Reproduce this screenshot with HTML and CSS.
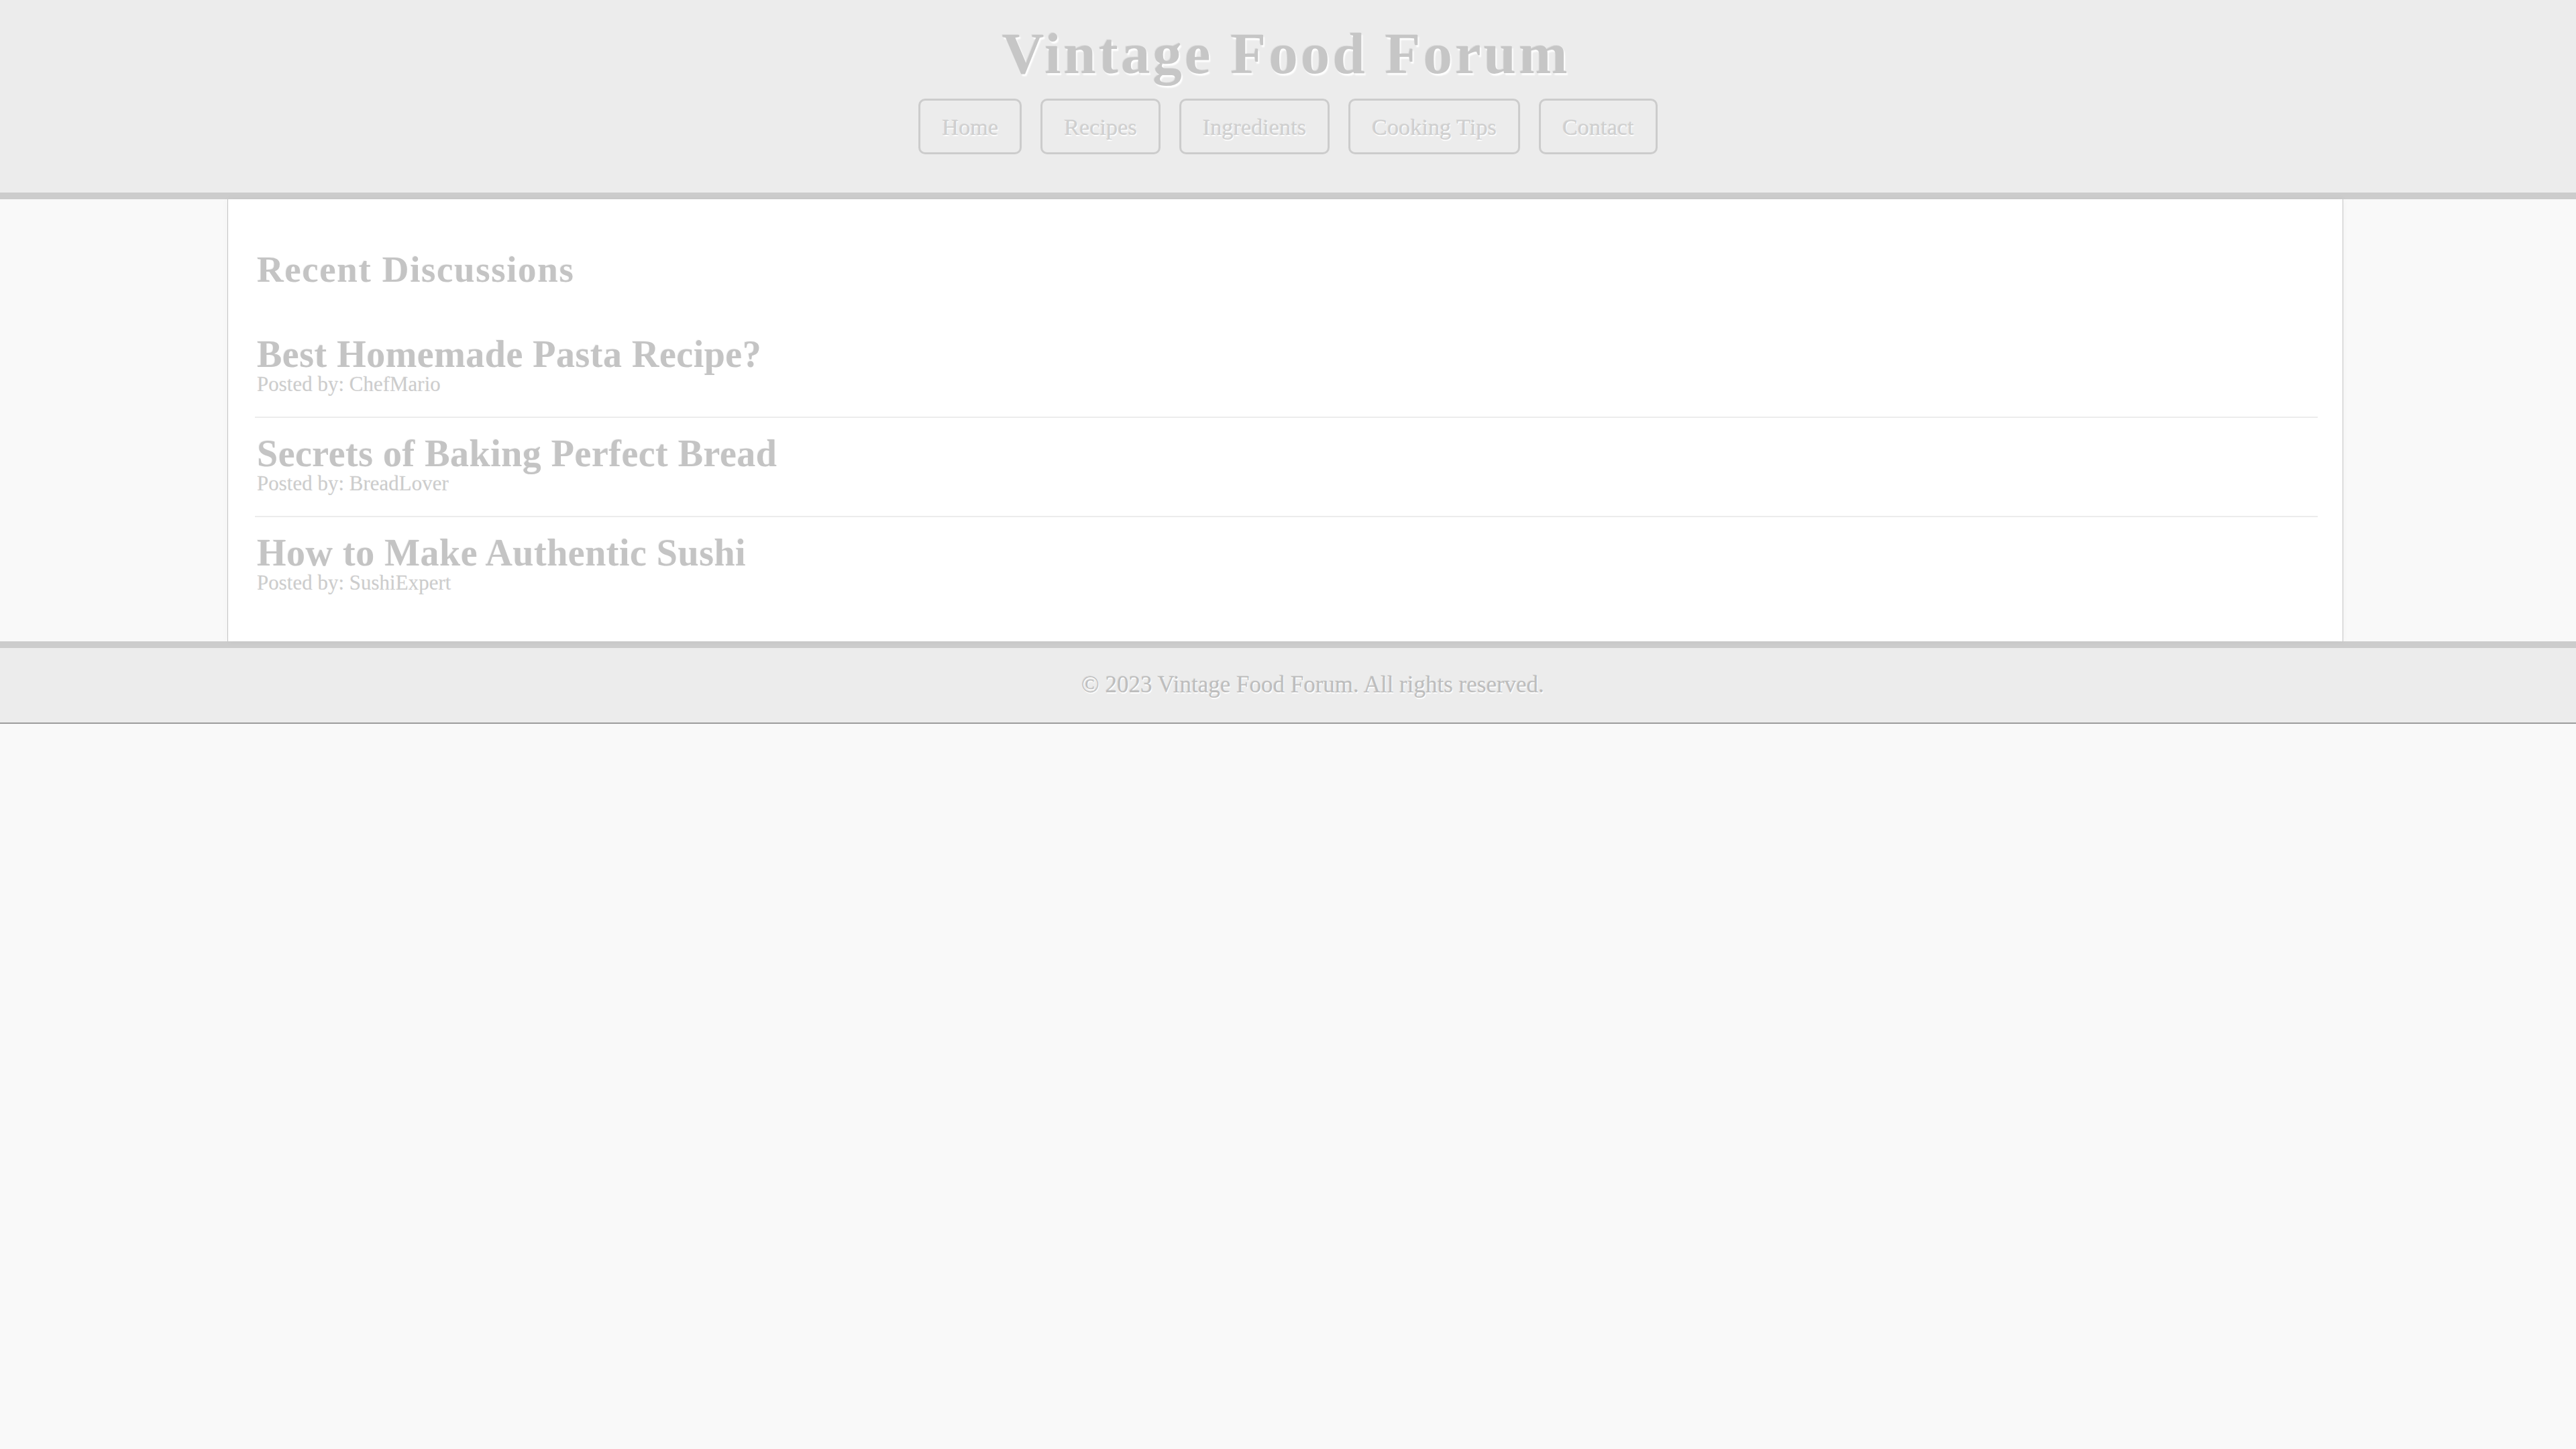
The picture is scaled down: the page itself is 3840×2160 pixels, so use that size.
FILE: index.html
```html
<!DOCTYPE html>
<html lang="en">
<head>
<meta charset="utf-8">
<title>Vintage Food Forum</title>
<link rel="stylesheet" href="styles.css">
</head>
<body>
<header class="site-header">
  <h1 class="site-title">Vintage Food Forum</h1>
  <nav class="nav">
    <a class="nav-link" href="#">Home</a>
    <a class="nav-link" href="#">Recipes</a>
    <a class="nav-link" href="#">Ingredients</a>
    <a class="nav-link" href="#">Cooking Tips</a>
    <a class="nav-link" href="#">Contact</a>
  </nav>
</header>
<main class="container">
  <h2 class="section-title">Recent Discussions</h2>
  <article class="post">
    <h3 class="post-title">Best Homemade Pasta Recipe?</h3>
    <p class="post-meta">Posted by: ChefMario</p>
  </article>
  <article class="post">
    <h3 class="post-title">Secrets of Baking Perfect Bread</h3>
    <p class="post-meta">Posted by: BreadLover</p>
  </article>
  <article class="post">
    <h3 class="post-title">How to Make Authentic Sushi</h3>
    <p class="post-meta">Posted by: SushiExpert</p>
  </article>
</main>
<footer class="site-footer">
  <p class="footer-text">&copy; 2023 Vintage Food Forum. All rights reserved.</p>
</footer>
</body>
</html>
```

FILE: styles.css
```css
html, body {
  margin: 0;
  padding: 0;
}

body {
  background: #f9f9f9;
  font-family: "Liberation Serif", "Times New Roman", serif;
  color: #c6c6c6;
}

.site-header {
  background: #ececec;
  border-bottom: 10px solid #cccccc;
  padding: 30px 0 57px;
  text-align: center;
}

.site-title {
  margin: 0;
  font-size: 87px;
  line-height: 100px;
  font-weight: bold;
  letter-spacing: 4px;
  padding-right: 6px;
  color: #c6c6c6;
  text-shadow: 2px 3px 2px #ffffff, -1px -1px 0 rgba(0, 0, 0, 0.06);
}

.nav {
  display: flex;
  justify-content: center;
  gap: 28px;
  margin-top: 17px;
}

.nav-link {
  display: block;
  font-size: 34.3px;
  line-height: 40px;
  padding: 18.5px 32px;
  border: 3px solid #cccccc;
  border-radius: 10px;
  color: #cfcfcf;
  text-decoration: none;
  text-shadow: 1px 2px 1px #ffffff, -1px -1px 0 rgba(0, 0, 0, 0.08);
}

.container {
  width: 80%;
  margin: 0 auto;
  padding: 0 37px 40px 43px;
  background: #ffffff;
  border-left: 1px solid #c4c4c4;
  border-right: 1px solid #c4c4c4;
  box-shadow: 0 0 10px rgba(0, 0, 0, 0.035);
  position: relative;
  left: -4px;
}

.section-title {
  margin: 0;
  padding-top: 73px;
  margin-bottom: 41px;
  font-size: 55px;
  line-height: 64px;
  letter-spacing: 1.6px;
  font-weight: bold;
  color: #c4c4c4;
  text-shadow: 2px 2px 1px #ffffff, -1px -1px 0 rgba(0, 0, 0, 0.05);
}

.post {
  padding: 25px 0 33px;
  border-bottom: 2px solid #ececec;
  margin-left: -3px;
  padding-left: 3px;
}

.post:last-of-type {
  border-bottom: none;
  padding-bottom: 32px;
}

.post-title {
  margin: 0;
  font-size: 56px;
  line-height: 56px;
  letter-spacing: 0.5px;
  font-weight: bold;
  color: #c4c4c4;
  text-shadow: 2px 2px 1px #ffffff, -1px -1px 0 rgba(0, 0, 0, 0.05);
}

.post-meta {
  margin: 2px 0 0;
  font-size: 31px;
  line-height: 30px;
  color: #cccccc;
  text-shadow: 1px 1px 0 #ffffff, -1px -1px 0 rgba(0, 0, 0, 0.06);
}

.site-footer {
  background: #ececec;
  border-top: 10px solid #cccccc;
  border-bottom: 2px solid #9c9c9c;
  padding: 35px 0 36px 74px;
  text-align: center;
}

.footer-text {
  margin: 0;
  font-size: 35px;
  line-height: 40px;
  color: #bdbdbd;
  text-shadow: 1px 2px 1px #ffffff, -1px -1px 0 rgba(0, 0, 0, 0.08);
}
```
